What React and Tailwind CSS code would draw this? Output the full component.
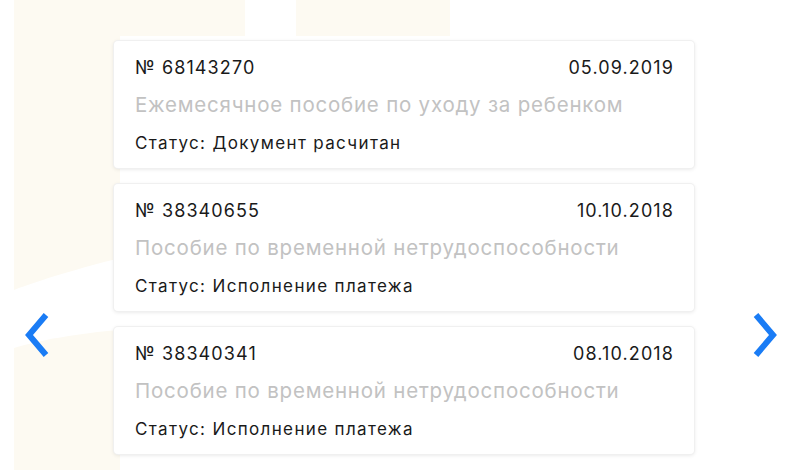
import React from "react";

const docs = [
  {
    number: "68143270",
    date: "05.09.2019",
    title: "Ежемесячное пособие по уходу за ребенком",
    status: "Документ расчитан",
  },
  {
    number: "38340655",
    date: "10.10.2018",
    title: "Пособие по временной нетрудоспособности",
    status: "Исполнение платежа",
  },
  {
    number: "38340341",
    date: "08.10.2018",
    title: "Пособие по временной нетрудоспособности",
    status: "Исполнение платежа",
  },
];

const Chevron = ({ dir }) => (
  <svg width="26" height="46" viewBox="0 0 26 46" fill="none">
    <polyline
      points={dir === "left" ? "22,3 5,23 22,43" : "4,3 21,23 4,43"}
      stroke="#1a7cf5"
      strokeWidth="6"
      strokeLinejoin="miter"
      strokeLinecap="butt"
    />
  </svg>
);

const DocCard = ({ doc }) => (
  <div className="h-[127px] w-[580px] rounded-[4px] bg-white px-[20px] pt-[15px] shadow-[0_1px_4px_rgba(0,0,0,0.12)] ring-1 ring-[#f0f0f0]">
    <div className="flex items-center justify-between text-[18px] leading-[24px] tracking-[1.1px] text-[#1a1a1a]">
      <span className="pl-px">№ {doc.number}</span>
      <span>{doc.date}</span>
    </div>
    <div className="mt-[10px] pl-px text-[20.5px] leading-[30px] tracking-[0.78px] text-[#c2c2c2]">
      {doc.title}
    </div>
    <div className="mt-[11px] pl-px text-[17px] leading-[24px] tracking-[1.35px] text-[#1a1a1a]">
      Статус: {doc.status}
    </div>
  </div>
);

export default function App() {
  return (
    <div
      className="relative h-[470px] w-[800px] overflow-hidden bg-white"
      style={{ fontFamily: "Inter, 'Noto Sans', sans-serif" }}
    >
      <svg
        className="absolute inset-0"
        width="800"
        height="470"
        viewBox="0 0 800 470"
      >
        <rect x="14" y="0" width="231" height="36" fill="#fdfaf2" />
        <rect x="296" y="0" width="154" height="36" fill="#fdfaf2" />
        <path d="M14 36 H120 V258 C80 268 40 280 14 290 Z" fill="#fdfaf2" />
        <path d="M14 348 C40 340 80 333 120 330 V470 H14 Z" fill="#fdfaf2" />
      </svg>

      <div className="relative flex h-full items-start">
        <div className="flex w-[114px] justify-start pl-[24px] pt-[312px]">
          <Chevron dir="left" />
        </div>
        <div className="flex flex-col gap-[16px] pt-[41px]">
          {docs.map((d) => (
            <DocCard key={d.number} doc={d} />
          ))}
        </div>
        <div className="flex flex-1 justify-start pl-[58px] pt-[312px]">
          <Chevron dir="right" />
        </div>
      </div>
    </div>
  );
}
